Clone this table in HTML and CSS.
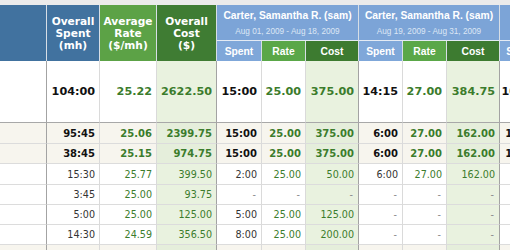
FILE: index.html
```html
<!DOCTYPE html>
<html>
<head>
<meta charset="utf-8">
<link rel="stylesheet" href="styles.css">
</head>
<body>
<div class="topbar"></div>
<table class="grid">
  <colgroup>
    <col class="w-label">
    <col class="w-ospent">
    <col class="w-arate">
    <col class="w-ocost">
    <col class="w-spent"><col class="w-rate"><col class="w-cost">
    <col class="w-spent2"><col class="w-rate"><col class="w-cost">
    <col class="w-spent3"><col class="w-rate3"><col class="w-cost3">
  </colgroup>
  <thead>
    <tr class="h1">
      <th rowspan="2" class="hb sep"></th>
      <th rowspan="2" class="hb">Overall<br>Spent<br>(mh)</th>
      <th rowspan="2" class="hg">Average<br>Rate<br>($/mh)</th>
      <th rowspan="2" class="hd sep">Overall<br>Cost<br>($)</th>
      <th colspan="3" class="grp sep"><div class="gname">Carter, Samantha R. (sam)</div><div class="gdate">Aug 01, 2009 - Aug 18, 2009</div></th>
      <th colspan="3" class="grp sep"><div class="gname">Carter, Samantha R. (sam)</div><div class="gdate">Aug 19, 2009 - Aug 31, 2009</div></th>
      <th colspan="3" class="grp sep"><div class="gname">Carter, Samantha R. (sam)</div><div class="gdate">Sep 01, 2009 - Sep 15, 2009</div></th>
    </tr>
    <tr class="h2">
      <th class="sb">Spent</th><th class="sg">Rate</th><th class="sd sep">Cost</th>
      <th class="sb">Spent</th><th class="sg">Rate</th><th class="sd sep">Cost</th>
      <th class="sb">Spent</th><th class="sg">Rate</th><th class="sd sep">Cost</th>
    </tr>
  </thead>
  <tbody>
    <tr class="big">
      <td class="sep"></td><td class="t">104:00</td><td class="g">25.22</td><td class="g c sep">2622.50</td>
      <td class="t">15:00</td><td class="g">25.00</td><td class="g c sep">375.00</td>
      <td class="t">14:15</td><td class="g">27.00</td><td class="g c sep">384.75</td>
      <td class="t">10:45</td><td class="g">25.00</td><td class="g c sep">268.75</td>
    </tr>
    <tr class="sum first">
      <td class="sep"></td><td class="t">95:45</td><td class="g">25.06</td><td class="g c sep">2399.75</td>
      <td class="t">15:00</td><td class="g">25.00</td><td class="g c sep">375.00</td>
      <td class="t">6:00</td><td class="g">27.00</td><td class="g c sep">162.00</td>
      <td class="t">10:45</td><td class="g">25.00</td><td class="g c sep">268.75</td>
    </tr>
    <tr class="sum">
      <td class="sep"></td><td class="t">38:45</td><td class="g">25.15</td><td class="g c sep">974.75</td>
      <td class="t">15:00</td><td class="g">25.00</td><td class="g c sep">375.00</td>
      <td class="t">6:00</td><td class="g">27.00</td><td class="g c sep">162.00</td>
      <td class="t">10:45</td><td class="g">25.00</td><td class="g c sep">268.75</td>
    </tr>
    <tr class="row alt">
      <td class="sep"></td><td class="t">15:30</td><td class="g">25.77</td><td class="g c sep">399.50</td>
      <td class="t">2:00</td><td class="g">25.00</td><td class="g c sep">50.00</td>
      <td class="t">6:00</td><td class="g">27.00</td><td class="g c sep">162.00</td>
      <td class="t">7:30</td><td class="g">25.00</td><td class="g c sep">187.50</td>
    </tr>
    <tr class="row">
      <td class="sep"></td><td class="t">3:45</td><td class="g">25.00</td><td class="g c sep">93.75</td>
      <td class="d">-</td><td class="d">-</td><td class="d c sep">-</td>
      <td class="d">-</td><td class="d">-</td><td class="d c sep">-</td>
      <td class="t">3:45</td><td class="g">25.00</td><td class="g c sep">93.75</td>
    </tr>
    <tr class="row">
      <td class="sep"></td><td class="t">5:00</td><td class="g">25.00</td><td class="g c sep">125.00</td>
      <td class="t">5:00</td><td class="g">25.00</td><td class="g c sep">125.00</td>
      <td class="d">-</td><td class="d">-</td><td class="d c sep">-</td>
      <td class="d">-</td><td class="d">-</td><td class="d c sep">-</td>
    </tr>
    <tr class="row">
      <td class="sep"></td><td class="t">14:30</td><td class="g">24.59</td><td class="g c sep">356.50</td>
      <td class="t">8:00</td><td class="g">25.00</td><td class="g c sep">200.00</td>
      <td class="d">-</td><td class="d">-</td><td class="d c sep">-</td>
      <td class="d">-</td><td class="d">-</td><td class="d c sep">-</td>
    </tr>
    <tr class="sum">
      <td class="sep"></td><td class="t">57:00</td><td class="g">24.97</td><td class="g c sep">1425.00</td>
      <td class="d">-</td><td class="d">-</td><td class="d c sep">-</td>
      <td class="t">8:15</td><td class="g">27.00</td><td class="g c sep">222.75</td>
      <td class="d">-</td><td class="d">-</td><td class="d c sep">-</td>
    </tr>
  </tbody>
</table>
</body>
</html>
```

FILE: styles.css
```css
html, body {
  margin: 0;
  padding: 0;
  overflow: hidden;
  background: #ffffff;
}
.topbar {
  height: 5px;
  background: #ebebeb;
}
.grid {
  table-layout: fixed;
  border-collapse: separate;
  border-spacing: 0;
  width: 659px;
  font-family: "DejaVu Sans", Verdana, sans-serif;
}
.w-label { width: 47px; }
.w-ospent { width: 53px; }
.w-arate { width: 57px; }
.w-ocost { width: 60px; }
.w-spent { width: 45px; }
.w-spent2 { width: 44px; }
.w-rate { width: 44px; }
.w-cost { width: 53px; }
.w-spent3 { width: 42px; }
.w-rate3 { width: 58px; }
.w-cost3 { width: 62px; }

th, td {
  box-sizing: border-box;
  padding: 0;
  white-space: nowrap;
  overflow: hidden;
}
th {
  color: #ffffff;
  text-align: center;
  vertical-align: middle;
  border-right: 1px solid #d7dee6;
}
.h1 th {
  height: 36px;
  font-family: "DejaVu Sans", Verdana, sans-serif;
  font-size: 10.6px;
  font-weight: bold;
  line-height: 12.3px;
}
.h1 th[rowspan] { height: 56px; }
.hb { background: #41729f; }
.hg { background: #5ca246; }
.hd { background: #3f7c33; }
.h1 th.grp {
  background: #7ca4d7;
  border-bottom: 1px solid #e4ebf4;
  font-family: "Liberation Sans", Arial, sans-serif;
  padding-top: 1px;
}
.gname {
  font-size: 10.3px;
  font-weight: bold;
  line-height: 12px;
}
.gdate {
  font-size: 8.2px;
  font-weight: normal;
  color: #dde7f5;
  line-height: 11px;
  margin-top: 4px;
}
.h2 th {
  height: 20px;
  font-family: "Liberation Sans", Arial, sans-serif;
  font-size: 10.3px;
  font-weight: bold;
}
.sb { background: #7fa7d9; }
.sg { background: #5aa748; }
.sd { background: #3d7b30; }

td {
  text-align: right;
  padding-right: 4px;
  border-right: 1px solid #dadada;
  border-bottom: 1px solid #dcdcdc;
  vertical-align: middle;
  color: #333333;
}
td.sep { border-right-color: #a3a3a3; }
td.c { background: #e9f2df; }
.g { color: #3b7c2c; }
.d { color: #8a8a8a; padding-right: 5px; }

.big td {
  height: 62px;
  font-size: 11.2px;
  font-weight: bold;
  border-bottom-color: #a8a8a8;
}
.big td.t { color: #111111; }

.sum td {
  height: 20px;
  font-size: 10px;
  font-weight: bold;
  background: #f7f5ee;
}
.sum.first td { height: 21px; }
.sum td.c { background: #e5eedb; }
.sum td.t { color: #111111; }

.row td {
  height: 20px;
  font-size: 9.6px;
}
.row.alt td { height: 21px; }
```
